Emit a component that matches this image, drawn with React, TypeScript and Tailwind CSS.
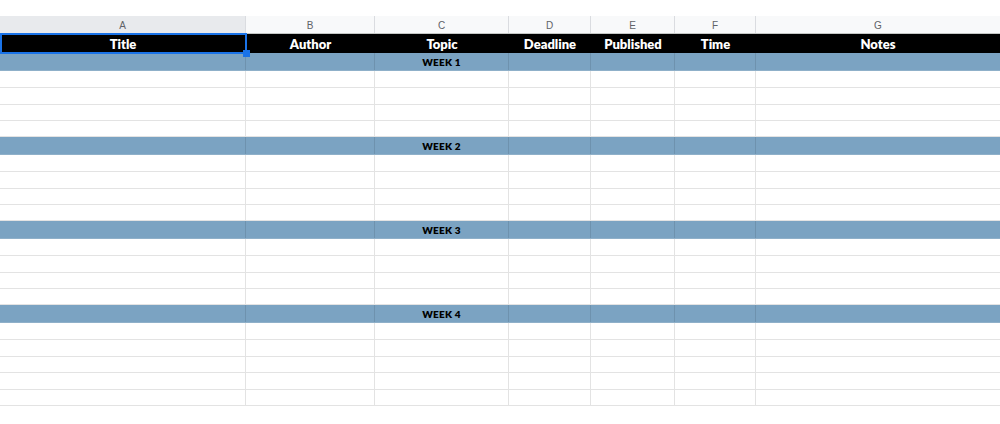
import React from 'react';

const columns = [
  { letter: 'A', title: 'Title', width: 'w-[246px]' },
  { letter: 'B', title: 'Author', width: 'w-[129px]' },
  { letter: 'C', title: 'Topic', width: 'w-[134px]' },
  { letter: 'D', title: 'Deadline', width: 'w-[82px]' },
  { letter: 'E', title: 'Published', width: 'w-[84px]' },
  { letter: 'F', title: 'Time', width: 'w-[81px]' },
  { letter: 'G', title: 'Notes', width: 'w-[244px]' },
];

const weeks = [
  { label: 'WEEK 1', rows: ['h-[17px]', 'h-[17px]', 'h-[16px]', 'h-[16px]'] },
  { label: 'WEEK 2', rows: ['h-[17px]', 'h-[17px]', 'h-[16px]', 'h-[16px]'] },
  { label: 'WEEK 3', rows: ['h-[17px]', 'h-[17px]', 'h-[16px]', 'h-[16px]'] },
  { label: 'WEEK 4', rows: ['h-[17px]', 'h-[17px]', 'h-[16px]', 'h-[17px]', 'h-[16px]'] },
];

function EmptyRow({ height }: { height: string }) {
  return (
    <div className={`flex ${height} border-b border-[#e3e3e3]`}>
      {columns.map((col, i) => (
        <div
          key={col.letter}
          className={`${col.width} h-full ${i < columns.length - 1 ? 'border-r border-[#e3e3e3]' : ''}`}
        />
      ))}
    </div>
  );
}

function WeekBand({ label }: { label: string }) {
  return (
    <div className="flex h-[18px] bg-[#7ba3c2] border-b border-[#8fb0c9]">
      {columns.map((col, i) => (
        <div
          key={col.letter}
          className={`${col.width} h-full flex items-center justify-center pt-[2px] ${
            i < columns.length - 1 ? 'border-r border-black/10' : ''
          }`}
        >
          {col.letter === 'C' && (
            <span className="text-[10px] font-extrabold text-black tracking-[0.2px]">{label}</span>
          )}
        </div>
      ))}
    </div>
  );
}

export default function App() {
  return (
    <div className="w-[1000px] h-[424px] bg-white overflow-hidden font-['Lato','Noto_Sans',sans-serif]">
      <div className="h-[16px]" />

      {/* Column letters */}
      <div className="flex h-[18px] border-b border-[#c4c7c5] font-['Liberation_Sans',Arial,sans-serif]">
        {columns.map((col, i) => (
          <div
            key={col.letter}
            className={`${col.width} h-full flex items-center justify-center pt-[2px] text-[10px] text-[#5f6368] ${
              i === 0 ? 'bg-[#e8eaed]' : 'bg-[#f8f9fa]'
            } ${i < columns.length - 1 ? 'border-r border-[#dadce0]' : ''}`}
          >
            {col.letter}
          </div>
        ))}
      </div>

      {/* Header row */}
      <div className="flex h-[19px] bg-black">
        {columns.map((col, i) => (
          <div
            key={col.letter}
            className={`${col.width} h-full relative flex items-center justify-center pt-[2px] text-[13px] font-extrabold text-white`}
          >
            {col.title}
            {i === 0 && (
              <div className="absolute -top-px left-0 -right-px -bottom-px border-2 border-[#1a73e8] z-10">
                <div className="absolute -right-[5px] -bottom-[5px] w-[7px] h-[7px] bg-[#1a73e8]" />
              </div>
            )}
          </div>
        ))}
      </div>

      {weeks.map((week) => (
        <div key={week.label}>
          <WeekBand label={week.label} />
          {week.rows.map((h, idx) => (
            <EmptyRow key={idx} height={h} />
          ))}
        </div>
      ))}
    </div>
  );
}
